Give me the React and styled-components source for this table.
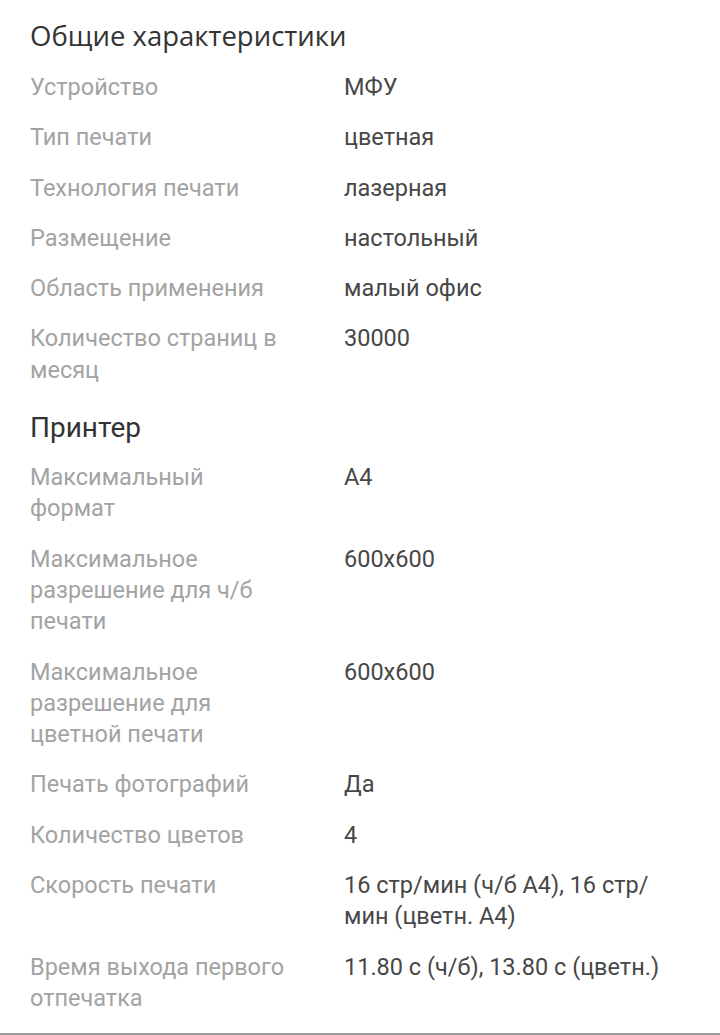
import React from "react";
import styled, { createGlobalStyle } from "styled-components";

const Global = createGlobalStyle`
  html, body { margin: 0; padding: 0; background: #fff; }
  body { font-family: Roboto, "Noto Sans", sans-serif; -webkit-font-smoothing: antialiased; }
`;

const Page = styled.div`
  box-sizing: border-box;
  height: 1035px;
  padding: 17px 30px 0 30px;
  background: #fff;
  border-bottom: 2px solid #9c9c9c;
  overflow: hidden;
`;

const Section = styled.section`
  display: flex;
  flex-direction: column;
  & + & { margin-top: 23px; }
`;

const Title = styled.h2`
  margin: 0 0 ${(p) => (p.$alt ? "15px" : "17px")} 0;
  font-family: ${(p) => (p.$alt ? "Roboto" : '"Open Sans"')}, sans-serif;
  font-weight: 400;
  font-size: ${(p) => (p.$alt ? "28px" : "27.5px")};
  line-height: 38px;
  color: #333;
`;

const List = styled.dl`
  margin: 0;
  display: grid;
  grid-template-columns: 314px 1fr;
  row-gap: 19px;
`;

const Label = styled.dt`
  margin: 0;
  font-size: 23.5px;
  line-height: 31.3px;
  color: #a3a3a3;
  white-space: pre-line;
`;

const Value = styled.dd`
  margin: 0;
  font-size: 23.5px;
  line-height: 31.3px;
  color: #474747;
  white-space: pre-line;
`;

const sections = [
  {
    title: "Общие характеристики",
    rows: [
      ["Устройство", "МФУ"],
      ["Тип печати", "цветная"],
      ["Технология печати", "лазерная"],
      ["Размещение", "настольный"],
      ["Область применения", "малый офис"],
      ["Количество страниц в\nмесяц", "30000"],
    ],
  },
  {
    title: "Принтер",
    alt: true,
    rows: [
      ["Максимальный\nформат", "A4"],
      ["Максимальное\nразрешение для ч/б\nпечати", "600x600"],
      ["Максимальное\nразрешение для\nцветной печати", "600x600"],
      ["Печать фотографий", "Да"],
      ["Количество цветов", "4"],
      ["Скорость печати", "16 стр/мин (ч/б А4), 16 стр/\nмин (цветн. А4)"],
      ["Время выхода первого\nотпечатка", "11.80 с (ч/б), 13.80 с (цветн.)"],
    ],
  },
];

export default function App() {
  return (
    <>
      <Global />
      <Page>
        {sections.map((s) => (
          <Section key={s.title}>
            <Title $alt={s.alt}>{s.title}</Title>
            <List>
              {s.rows.map(([l, v]) => (
                <React.Fragment key={l}>
                  <Label>{l}</Label>
                  <Value>{v}</Value>
                </React.Fragment>
              ))}
            </List>
          </Section>
        ))}
      </Page>
    </>
  );
}
